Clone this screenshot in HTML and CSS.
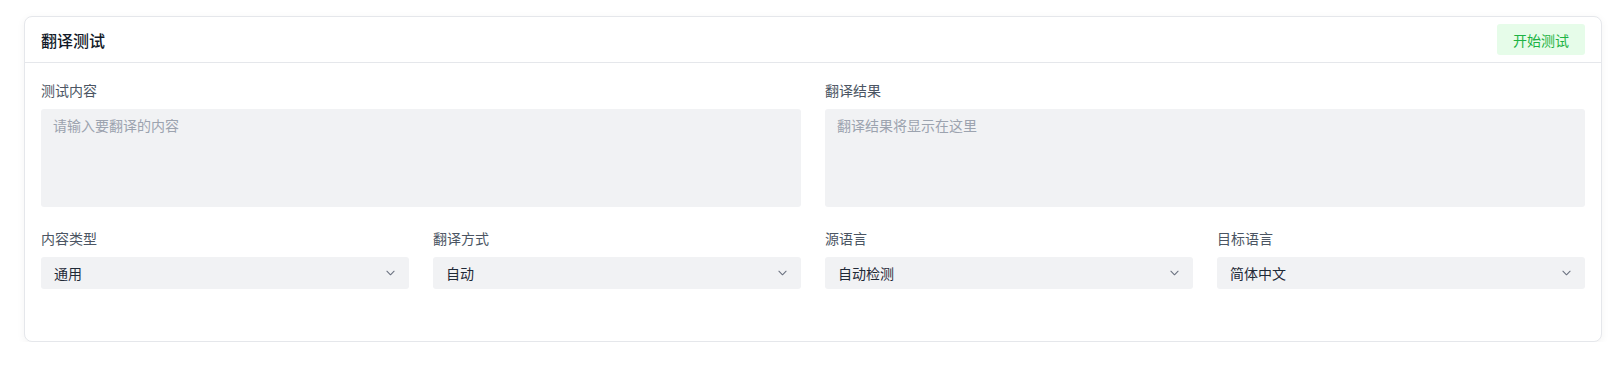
FILE: index.html
```html
<!DOCTYPE html>
<html lang="zh-CN">
<head>
<meta charset="utf-8">
<title>翻译测试</title>
<link rel="stylesheet" href="styles.css">
</head>
<body>
<div class="card">
  <div class="card-header">
    <div class="card-title">翻译测试</div>
    <button class="btn-start" type="button">开始测试</button>
  </div>
  <div class="card-body">
    <div class="grid-two">
      <div class="field">
        <label class="field-label">测试内容</label>
        <textarea class="textarea" placeholder="请输入要翻译的内容"></textarea>
      </div>
      <div class="field">
        <label class="field-label">翻译结果</label>
        <textarea class="textarea" placeholder="翻译结果将显示在这里" readonly></textarea>
      </div>
    </div>
    <div class="grid-four">
      <div class="field">
        <label class="field-label">内容类型</label>
        <div class="select"><span>通用</span><svg class="chev" viewBox="0 0 10 6" width="9" height="6"><path d="M1 1l4 4 4-4" fill="none" stroke="#6b7280" stroke-width="1.2" stroke-linecap="round" stroke-linejoin="round"/></svg></div>
      </div>
      <div class="field">
        <label class="field-label">翻译方式</label>
        <div class="select"><span>自动</span><svg class="chev" viewBox="0 0 10 6" width="9" height="6"><path d="M1 1l4 4 4-4" fill="none" stroke="#6b7280" stroke-width="1.2" stroke-linecap="round" stroke-linejoin="round"/></svg></div>
      </div>
      <div class="field">
        <label class="field-label">源语言</label>
        <div class="select"><span>自动检测</span><svg class="chev" viewBox="0 0 10 6" width="9" height="6"><path d="M1 1l4 4 4-4" fill="none" stroke="#6b7280" stroke-width="1.2" stroke-linecap="round" stroke-linejoin="round"/></svg></div>
      </div>
      <div class="field">
        <label class="field-label">目标语言</label>
        <div class="select"><span>简体中文</span><svg class="chev" viewBox="0 0 10 6" width="9" height="6"><path d="M1 1l4 4 4-4" fill="none" stroke="#6b7280" stroke-width="1.2" stroke-linecap="round" stroke-linejoin="round"/></svg></div>
      </div>
    </div>
  </div>
</div>
</body>
</html>
```

FILE: styles.css
```css
* { box-sizing: border-box; }
html, body { background: #ffffff; }
body {
  margin: 0;
  padding: 16px 16px 0 24px;
  font-family: "Noto Sans CJK SC", "Noto Sans", "Liberation Sans", sans-serif;
  color: #1f2937;
}
.card {
  border: 1px solid #e5e7eb;
  border-radius: 8px;
  background: #fff;
  box-shadow: 0 2px 8px rgba(0, 0, 0, 0.05);
}
.card-header {
  height: 46px;
  padding: 0 16px;
  display: flex;
  align-items: center;
  justify-content: space-between;
  border-bottom: 1px solid #e5e7eb;
}
.card-title {
  font-size: 16px;
  font-weight: 500;
  color: #111827;
  line-height: 22px;
}
.btn-start {
  width: 88px;
  height: 31px;
  border: 0;
  border-radius: 3px;
  background: #e6fce9;
  color: #1db344;
  font-family: inherit;
  font-size: 14px;
  padding: 0;
}
.card-body {
  padding: 16px 16px 52px;
  display: flex;
  flex-direction: column;
  gap: 20px;
}
.grid-two {
  display: grid;
  grid-template-columns: 1fr 1fr;
  gap: 24px;
}
.grid-four {
  display: grid;
  grid-template-columns: repeat(4, 1fr);
  gap: 24px;
}
.field {
  display: flex;
  flex-direction: column;
  gap: 8px;
}
.field-label {
  font-size: 14px;
  line-height: 22px;
  color: #4b5563;
}
.textarea {
  display: block;
  width: 100%;
  height: 98px;
  resize: none;
  border: 0;
  border-radius: 3px;
  background: #f1f2f4;
  padding: 6px 12px;
  font-family: inherit;
  font-size: 14px;
  line-height: 20px;
  color: #1f2937;
  outline: none;
}
.textarea::placeholder { color: #9ca3af; }
.select {
  height: 32px;
  border-radius: 3px;
  background: #f1f2f4;
  padding: 0 14px 0 13px;
  display: flex;
  align-items: center;
  justify-content: space-between;
  font-size: 14px;
  color: #1f2937;
}
.chev { display: block; }
```
